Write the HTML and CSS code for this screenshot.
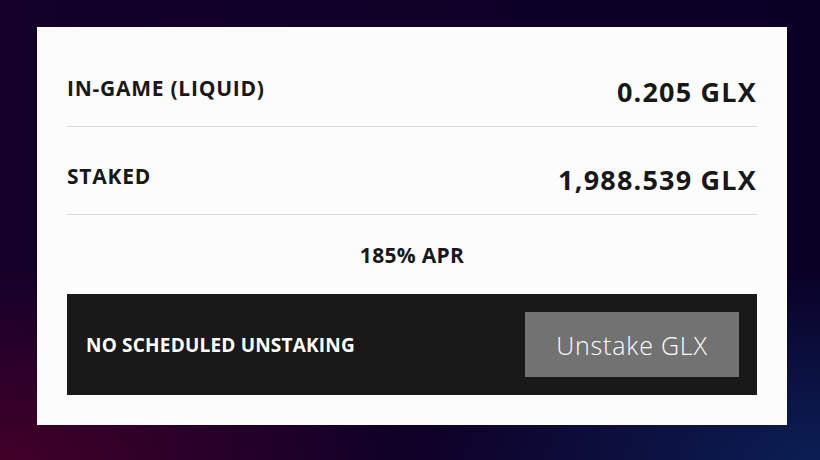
FILE: index.html
```html
<!DOCTYPE html>
<html lang="en">
<head>
    <meta charset="UTF-8">
    <meta name="viewport" content="width=device-width, initial-scale=1.0">
    <title>Staking</title>
    <link rel="stylesheet" href="styles.css">
</head>
<body>
    <div class="card">
        <div class="row">
            <span class="label">IN-GAME (LIQUID)</span>
            <span class="value">0.205 GLX</span>
        </div>
        <div class="row">
            <span class="label">STAKED</span>
            <span class="value">1,988.539 GLX</span>
        </div>
        <div class="apr">185% APR</div>
        <div class="unstake">
            <span class="unstake-status">NO SCHEDULED UNSTAKING</span>
            <button class="unstake-btn">Unstake GLX</button>
        </div>
    </div>
</body>
</html>
```

FILE: styles.css
```css
html, body {
    height: 100%;
}
body {
    margin: 0;
    padding: 27px 0 0 37px;
    box-sizing: border-box;
    font-family: "Open Sans", "DejaVu Sans", sans-serif;
    color: #181818;
    background-color: #0c0028;
    background-image:
        radial-gradient(ellipse 70% 60% at 0% 100%, rgba(70, 0, 40, 0.9), rgba(70, 0, 40, 0) 70%),
        radial-gradient(ellipse 70% 60% at 100% 100%, rgba(12, 34, 90, 0.9), rgba(12, 34, 90, 0) 70%),
        linear-gradient(90deg, #14002a, #0a0026);
}
.card {
    width: 750px;
    box-sizing: border-box;
    padding: 12px 30px 30px;
    background: #fcfcfc;
}
.row {
    display: flex;
    justify-content: space-between;
    align-items: center;
    padding: 29px 0 18px;
    border-bottom: 1px solid #dadada;
}
.label {
    font-size: 21px;
    line-height: 24px;
    font-weight: 700;
    letter-spacing: 0.75px;
}
.value {
    padding-top: 8px;
    font-size: 27px;
    line-height: 32px;
    font-weight: 700;
    letter-spacing: 1.2px;
}
.apr {
    height: 79px;
    display: flex;
    justify-content: center;
    align-items: center;
    font-size: 21px;
    font-weight: 700;
    letter-spacing: 0.3px;
}
.unstake {
    display: flex;
    justify-content: space-between;
    align-items: center;
    padding: 18px 18px 18px 19px;
    background: #191919;
}
.unstake-status {
    color: #fff;
    font-size: 19px;
    font-weight: 700;
    letter-spacing: 0.2px;
}
.unstake-btn {
    width: 214px;
    height: 65px;
    border: none;
    background: #727272;
    color: #fff;
    font-family: "Open Sans", "DejaVu Sans", sans-serif;
    font-size: 25px;
    font-weight: 300;
    letter-spacing: 0.8px;
    cursor: pointer;
}
```
